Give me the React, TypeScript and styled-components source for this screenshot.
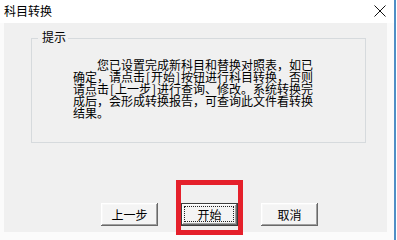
import styled, { createGlobalStyle } from 'styled-components'

const GlobalStyle = createGlobalStyle`
	html, body {
		margin: 0;
		padding: 0;
		background: #ffffff;
	}
`

const Window = styled.div`
	width: 397px;
	height: 240px;
	display: flex;
	background: #ffffff;
	font-family: 'Noto Sans CJK SC', 'Liberation Sans', sans-serif;
	font-size: 12px;
	color: #000;
	overflow: hidden;
`

const Main = styled.div`
	width: 394px;
	display: flex;
	flex-direction: column;
	background: #fbfbfb;
`

const EdgeLine = styled.div`
	width: 2px;
	background: #4f8fc6;
`

const TitleBar = styled.div`
	height: 23px;
	flex: none;
	display: flex;
	align-items: center;
	justify-content: space-between;
	padding: 0 8px 0 4px;
	background: #ffffff;
`

const Title = styled.span`
	font-size: 12px;
	line-height: 12px;
	margin-top: -1px;
`

const CloseIcon = styled.svg`
	display: block;
	margin-top: -1px;
`

const Client = styled.div`
	flex: 1;
	margin: 0 7px 8px 4px;
	padding: 15px 0 0 27px;
	background: #f0f0f0;
	display: flex;
	flex-direction: column;
`

const Group = styled.div`
	position: relative;
	width: 333px;
	height: 103px;
	border: 1px solid #d6dadd;
	padding: 20px 0 0 41px;
	box-sizing: border-box;
	width: 335px;
	height: 105px;
`

const Legend = styled.span`
	position: absolute;
	top: -8px;
	left: 6px;
	padding: 0 2px 0 4px;
	background: #f0f0f0;
	line-height: 12px;
`

const Message = styled.div`
	line-height: 12px;
`

const Line = styled.div<{ $indent?: boolean }>`
	white-space: nowrap;
	text-indent: ${p => (p.$indent ? '24px' : '0')};
`

const Bracket = styled.span`
	display: inline-block;
	width: 6px;
	text-align: center;
	text-indent: 0;
`

const ButtonRow = styled.div`
	display: flex;
	gap: 23px;
	margin: 60px 0 0 70px;
`

const Button = styled.button<{ $default?: boolean }>`
	position: relative;
	width: 57px;
	height: 23px;
	padding: 0;
	border: none;
	background: #f4f4f4;
	font-family: inherit;
	font-size: 12px;
	line-height: 12px;
	color: #000;
	box-shadow: ${p =>
		p.$default
			? 'inset 0 0 0 1px #3c3c3c, inset -2px -2px #696969, inset 2px 2px #ffffff, inset -3px -3px #a0a0a0'
			: 'inset -1px -1px #696969, inset 1px 1px #ffffff, inset -2px -2px #a0a0a0, inset 2px 2px #f8f8f8'};
`

const FocusRing = styled.span`
	position: absolute;
	inset: 3px 4px 4px 3px;
	border: 1px dotted #222;
`

const ButtonLabel = styled.span`
	position: relative;
`

const Highlight = styled.div`
	position: relative;
	display: flex;
`

const RedFrame = styled.span`
	position: absolute;
	top: -23px;
	left: -5px;
	right: -5px;
	bottom: -9px;
	border: 5px solid #e5202b;
	pointer-events: none;
`

const App = () => {
	return (
		<>
			<GlobalStyle />
			<Window>
				<Main>
					<TitleBar>
						<Title>科目转换</Title>
						<CloseIcon width='12' height='12' viewBox='0 0 12 12'>
							<path d='M0.5 0.5 L11.5 11.5 M11.5 0.5 L0.5 11.5' stroke='#111' strokeWidth='1' fill='none' />
						</CloseIcon>
					</TitleBar>
					<Client>
						<Group>
							<Legend>提示</Legend>
							<Message>
								<Line $indent>您已设置完成新科目和替换对照表，如已</Line>
								<Line>
									确定，请点击<Bracket>[</Bracket>开始<Bracket>]</Bracket>按钮进行科目转换，否则
								</Line>
								<Line>
									请点击<Bracket>[</Bracket>上一步<Bracket>]</Bracket>进行查询、修改。系统转换完
								</Line>
								<Line>成后，会形成转换报告，可查询此文件看转换</Line>
								<Line>结果。</Line>
							</Message>
						</Group>
						<ButtonRow>
							<Button>上一步</Button>
							<Highlight>
								<Button $default>
									<FocusRing />
									<ButtonLabel>开始</ButtonLabel>
								</Button>
								<RedFrame />
							</Highlight>
							<Button>取消</Button>
						</ButtonRow>
					</Client>
				</Main>
				<EdgeLine />
			</Window>
		</>
	)
}

export default App
